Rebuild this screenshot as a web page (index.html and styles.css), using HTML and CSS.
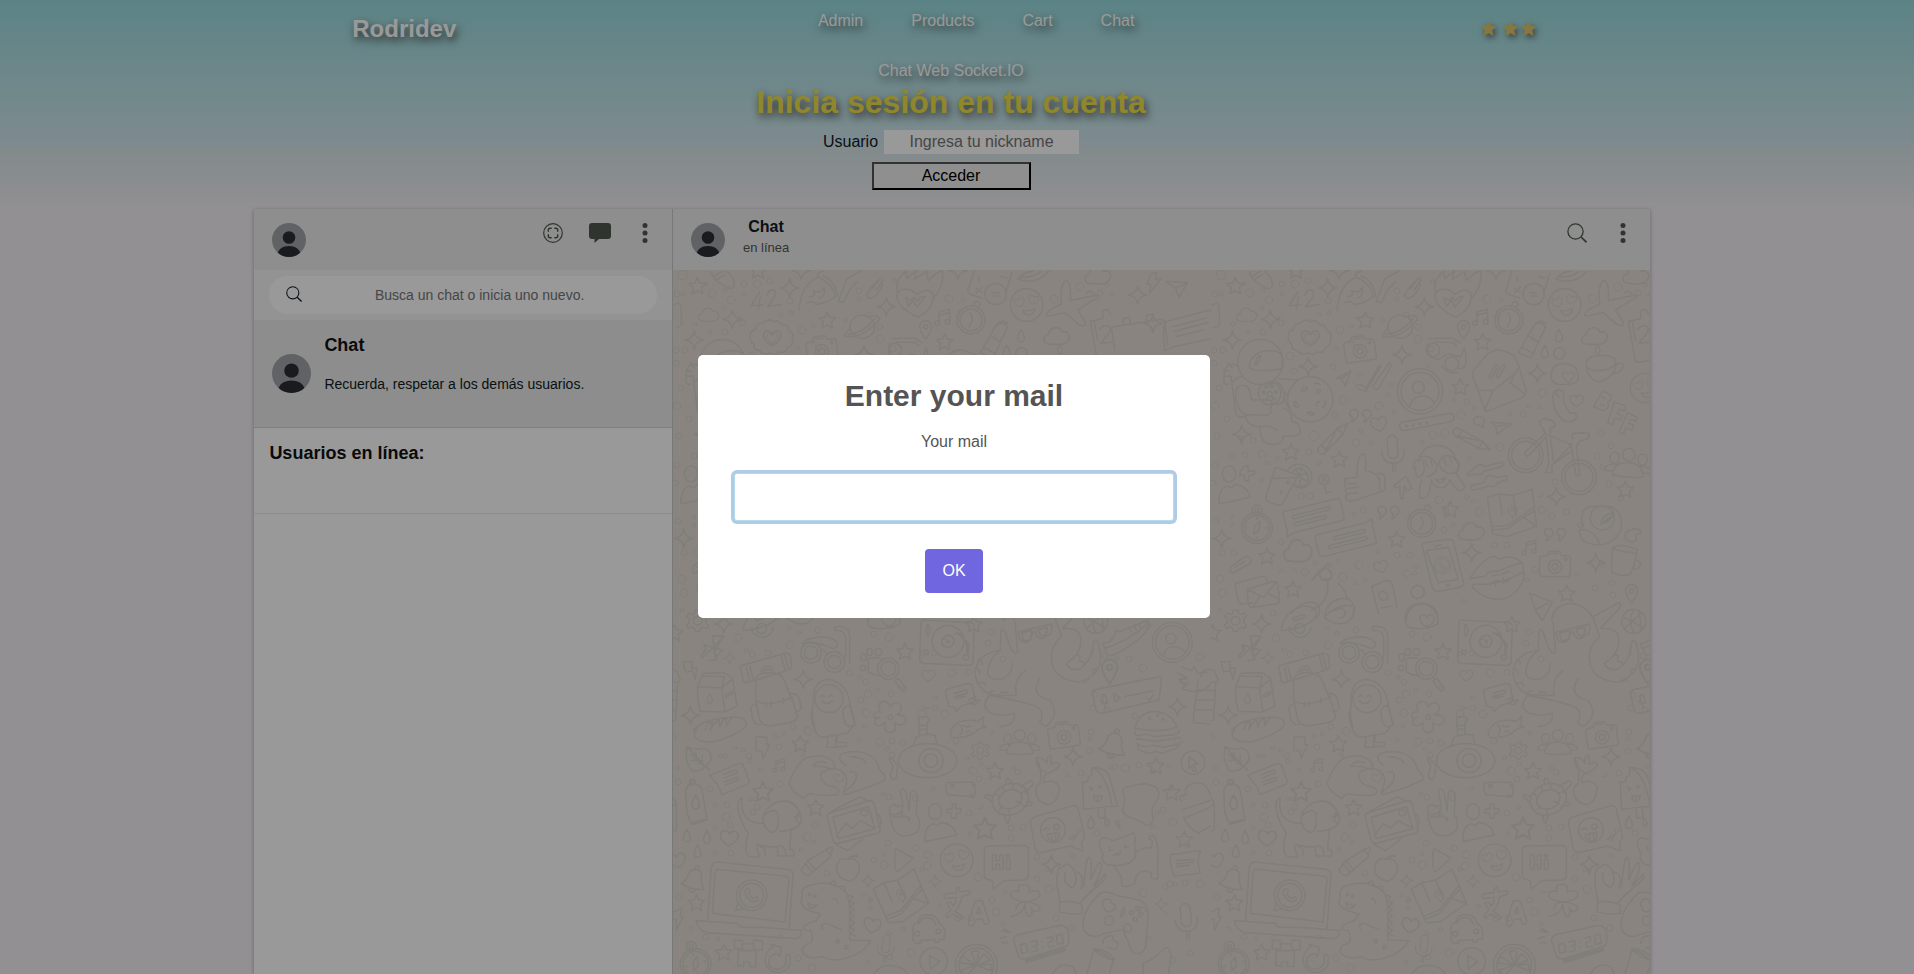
FILE: index.html
```html
<!DOCTYPE html>
<html lang="es">
<head>
<meta charset="utf-8">
<title>Chat</title>
<link rel="stylesheet" href="styles.css">
</head>
<body>
<svg class="defs" aria-hidden="true">
  <defs>
    <symbol id="avatar" viewBox="0 0 34 34">
      <clipPath id="disc"><circle cx="17" cy="17" r="17"/></clipPath>
      <g clip-path="url(#disc)">
        <rect width="34" height="34" fill="#a1a4a8"/>
        <circle cx="17" cy="14.500" r="6.300" fill="#2b2d34"/>
        <path d="M5 34C5 26 11 23 17 23s12 3 12 11z" fill="#2b2d34"/>
      </g>
    </symbol>
    <symbol id="search" viewBox="0 0 20 20">
      <circle cx="8.500" cy="8.500" r="7.600" fill="none" stroke="currentColor" stroke-width="1.300"/>
      <path d="M14 14l5.500 5.300" fill="none" stroke="currentColor" stroke-width="1.700"/>
    </symbol>
    <symbol id="dots" viewBox="0 0 20 20">
      <g fill="currentColor"><circle cx="10" cy="2.500" r="2.500"/><circle cx="10" cy="10" r="2.500"/><circle cx="10" cy="17.500" r="2.500"/></g>
    </symbol>
    <symbol id="star" viewBox="0 0 16 16">
      <path fill="#e1c869" stroke="#e1c869" stroke-width="1" stroke-linejoin="round" d="M8 1l2.100 4.500 5.200.7-3.800 3.600 1 5.200L8 12.600l-4.500 2.400 1-5.200L.7 6.200l5.200-.7z"/>
    </symbol>
  </defs>
</svg>

<header class="top">
  <nav class="nav">
    <a class="brand" href="#">Rodridev</a>
    <ul class="links">
      <li><a href="#">Admin</a></li>
      <li><a href="#">Products</a></li>
      <li><a href="#">Cart</a></li>
      <li><a href="#">Chat</a></li>
    </ul>
    <div class="stars">
      <svg><use href="#star"/></svg>
      <svg class="star-gap"><use href="#star"/></svg>
      <svg><use href="#star"/></svg>
    </div>
  </nav>
  <form class="login">
    <p class="sub">Chat Web Socket.IO</p>
    <h1 class="title">Inicia sesión en tu cuenta</h1>
    <div class="field">
      <label for="nick">Usuario</label>
      <input id="nick" type="text" placeholder="Ingresa tu nickname">
    </div>
    <button class="enter" type="button">Acceder</button>
  </form>
</header>

<main class="app">
  <aside class="side">
    <div class="bar">
      <svg class="avatar"><use href="#avatar"/></svg>
      <div class="tools">
        <button type="button" aria-label="Estados"><svg class="icon" viewBox="0 0 20 20" fill="none" stroke="currentColor"><circle cx="10" cy="10" r="9.300" stroke-width="1.200"/><path stroke-width="1.400" stroke-linecap="round" d="M5.300 8.200V7c0-1.200.6-1.800 1.800-1.800h1.100M11.800 5.200h1.100c1.200 0 1.800.6 1.800 1.800v1.200M14.700 11.800V13c0 1.200-.6 1.800-1.800 1.800h-1.100M8.200 14.800H7.100c-1.200 0-1.800-.6-1.800-1.800v-1.200"/></svg></button>
        <button type="button" aria-label="Mensajes"><svg class="icon bubble" viewBox="0 0 22 20"><path fill="currentColor" d="M3 0h16a3 3 0 0 1 3 3v10a3 3 0 0 1-3 3h-9l-4.500 4v-4H3a3 3 0 0 1-3-3V3a3 3 0 0 1 3-3z"/></svg></button>
        <button type="button" aria-label="Menú"><svg class="icon"><use href="#dots"/></svg></button>
      </div>
    </div>
    <div class="find">
      <label class="pill">
        <svg class="find-icon"><use href="#search"/></svg>
        <input type="text" aria-label="Buscar" placeholder="Busca un chat o inicia uno nuevo.">
      </label>
    </div>
    <article class="item">
      <svg class="avatar-lg"><use href="#avatar"/></svg>
      <div>
        <h2 class="item-title">Chat</h2>
        <p class="item-text">Recuerda, respetar a los demás usuarios.</p>
      </div>
    </article>
    <section class="online"><h2 class="item-title">Usuarios en línea:</h2></section>
  </aside>
  <section class="room">
    <div class="bar">
      <svg class="avatar"><use href="#avatar"/></svg>
      <div class="who">
        <h2 class="who-name">Chat</h2>
        <p class="who-state">en línea</p>
      </div>
      <div class="tools">
        <button type="button" aria-label="Buscar"><svg class="icon"><use href="#search"/></svg></button>
        <button type="button" aria-label="Menú"><svg class="icon"><use href="#dots"/></svg></button>
      </div>
    </div>
    <div class="wall">
      <svg class="doodles" aria-hidden="true">
        <defs>
          <path id="s5" d="M0-24L7-8 25-6 12 6 16 24 0 15-16 24-12 6-25-6-7-8z"/>
          <path id="s4" d="M0-28Q3-3 28 0 3 3 0 28-3 3-28 0-3-3 0-28z"/>
          <path id="heart" d="M0 22C-14 14-26 4-24-9-21-24-4-22 0-10 4-22 21-24 24-9 26 4 14 14 0 22z"/>
          <path id="drop" d="M0-20Q12 0 10 8A10 10 0 0 1-10 8Q-12 0 0-20z"/>
          <path id="cloud" d="M-26 22C-46 20-42-6-26-6-24-30 8-34 14-14 34-20 44 2 32 12 28 28-6 24-26 22z"/>
          <g id="cam"><path d="M-46-16Q-46-24-38-24L-22-26-18-38H14L20-26 38-24Q46-24 46-16V30Q46 38 38 38H-38Q-46 38-46 30z"/><circle cy="8" r="20"/><circle cy="8" r="9"/><path d="M-12-31H8"/><circle cx="32" cy="-14" r="4"/></g>
          <g id="note"><path d="M-14 18V-16L18-24V12M-14-6L18-14"/><circle cx="-20" cy="18" r="7"/><circle cx="12" cy="13" r="7"/></g>
          <g id="quote"><path d="M-28 0A13 13 0 1 1-10 12Q-14 24-24 24-18 16-20 8-26 8-28 0zM10 0A13 13 0 1 1 28 12Q24 24 14 24 20 16 18 8 12 8 10 0z"/></g>
          <g id="love"><circle r="49"/><use href="#heart" transform="translate(-22 -8) rotate(-14) scale(.65)"/><use href="#heart" transform="translate(20 -16) rotate(14) scale(.65)"/><path d="M-12 16Q6 22 24 10 20 34 2 30-8 28-12 16z"/></g>
          <g id="clock"><circle r="42"/><circle r="33"/><path d="M-2-20Q8-6 2 6L-6 20M-36-28A12 12 0 0 1-44-10M8-44l2-8Q22-60 28-48L22-40"/></g>
          <g id="pencil"><path d="M-56 12L26-12 60 0 26 12-56 12Q-66 10-66 0t10-12L26-12V12M-44-12V12M46-5V5"/></g>
          <g id="msg"><path d="M-84-34H76Q88-34 88-22V22Q88 34 76 34H-70L-92 42-88 26V-22Q-88-34-84-34z"/><path d="M-58-16H50a5 5 0 0 1 0 10H-58a5 5 0 0 1 0-10zM-58 6H30a5 5 0 0 1 0 10H-58a5 5 0 0 1 0-10z"/></g>
          <g id="pin"><path d="M0 30Q-18 4-18-8A18 18 0 0 1 18-8Q18 4 0 30z"/><circle cy="-8" r="6"/></g>
          <g id="mic"><rect x="-15" y="-52" width="30" height="70" rx="15"/><path d="M-34-6Q-32 30 0 32T34-6M-4 32V58M4 32V58"/></g>
          <g id="bell"><path d="M-36 22Q-22 10-20-10-18-30 0-30T20-10Q22 10 36 22 0 34-36 22zM-8 30A9 9 0 0 0 10 30"/><circle cy="-36" r="6"/></g>
          <g id="people"><circle cx="0" cy="-26" r="19"/><path d="M-46 38Q-44-2 0-2T46 38Q0 46-46 38z"/><ellipse cx="-42" cy="-14" rx="14" ry="17"/><ellipse cx="42" cy="-14" rx="14" ry="17"/><path d="M-46 26H-70Q-68 4-36 6M46 26H70Q68 4 36 6"/></g>
          <g id="user"><ellipse cx="-14" cy="-34" rx="20" ry="24"/><path d="M-44 56Q-46 10-20 2L-6 8 4-2Q42 2 50 36z"/></g>
          <g id="gear"><path d="M-7-32H7L9-22 17-18 26-24 33-14 25-6V6L33 14 26 24 17 19 8 24 6 32H-7L-9 23-18 18-27 24-33 13-25 6V-6L-33-13-26-24-17-18-9-22z"/><circle r="13"/></g>
          <g id="compass"><circle r="46"/><circle r="38"/><path d="M-10 18L-6-8 10-20 6 8zM0-32v6M0 26v6M-32 0h6M26 0h6"/><circle cy="-54" r="15"/><circle cy="-54" r="6"/></g>
          <g id="profile"><circle r="68"/><circle r="57"/><circle cx="-5" cy="-12" r="18"/><path d="M-30 44Q-24 16 4 14 30 14 42 32"/></g>
          <g id="phone"><circle r="46"/><path d="M-40 22L-48 46-20 40"/><circle r="36"/><path d="M-18-16Q-8-26-4-12L-8-4Q-2 8 6 10L14 4Q26 10 16 18-2 24-16 2-22-8-18-16z"/></g>
          <g id="map"><path d="M-72-44L-36-54 6-50 62-68 76 42 38 56-14 74-56 66zM-36-54L-28 6M6-50L14 10M-58 44L-10 40 70-16M-54 54L-10 50 36 16 76 44M36 16L70-4"/><use href="#pin" transform="translate(4 -2) scale(.7)"/></g>
          <pattern id="tile" width="538" height="704" patternUnits="userSpaceOnUse">
            <g class="ink" transform="scale(.33333) translate(-30 -30)">
              <use href="#s5" x="103" y="77"/><use href="#s5" x="285" y="30"/><use href="#s5" x="493" y="180"/><use href="#s5" x="845" y="245"/><use href="#s5" x="778" y="380"/><use href="#s5" x="270" y="575"/><use href="#s5" x="415" y="597"/><use href="#s5" x="748" y="747"/><use href="#s5" x="587" y="837"/><use href="#s5" x="198" y="888"/><use href="#s5" x="276" y="987"/><use href="#s5" x="1097" y="1000"/><use href="#s5" x="1273" y="688"/>
              <use href="#s4" x="208" y="178"/><use href="#s4" x="380" y="84"/><use href="#s4" x="94" y="240"/><use href="#s4" x="670" y="140"/><use href="#s4" x="603" y="284"/><use href="#s4" x="322" y="319"/><use href="#s4" x="122" y="523"/><use href="#s4" x="1009" y="340"/><use href="#s4" x="1066" y="710"/><use href="#s4" x="812" y="878"/><use href="#s4" x="1184" y="908"/><use href="#s4" x="62" y="835"/><use href="#s4" x="415" y="32"/><use href="#s4" x="885" y="32"/><use href="#s4" x="1424" y="105"/><use href="#s4" x="1470" y="190"/>
              <path d="M145 35Q150 62 182 76 210 96 214 74 214 50 190 34M150 50l28-16M158 60l26-16"/>
              <path d="M290 96l-26 42 36-4m-8-22l-6 36M312 106q4-18 20-16 14 10-6 32l-12 18 40-6"/>
              <path d="M408 150Q416 70 466 52 510 70 518 110 490 130 458 134 456 120 430 128M466 50Q456 40 480 34M480 48Q516 60 524 108M526 124l26-68 44-24M526 124l16 4Q560 80 584 66M440 110q20 0 12-18 24 10 32-10 4 30-16 32"/>
              <path d="M612 110q0-24 46-58M620 116q20 0 40-44M628 86l18-24M640 90l20-30M612 100q-4 16 12 14"/>
              <path d="M765 172Q700 140 702 108 708 80 744 90L762 104Q790 80 808 98 820 140 765 172zM704 98Q694 60 728 34L732 56 760 32 754 58 790 34 796 62 820 40 838 32Q846 76 810 116"/>
              <path d="M728 112l8 26 16-16 10 20 24-32-14 2-8 12-10-12-10 10z"/>
              <path d="M934 30L914 92Q916 102 930 106L956 114M1046 40L1028 100"/><circle cx="998" cy="102" r="32"/><path d="M986 98h22M988 108h22M940 86l18 10M958 82l-18 16M948 50v14M1014 50l18 4"/>
              <path d="M1066 56Q1080 36 1110 34M1066 58Q1120 76 1158 34M1074 50Q1110 54 1134 34"/>
              <use href="#love" x="1091" y="135"/><use href="#clock" x="924" y="180"/><use href="#note" x="842" y="172"/><use href="#pin" x="788" y="208"/>
              <path d="M1206 62q20-4 16 60l76-16q22 4-10 16l-44 28 22 34q4 22-20 8l-40-34-46 10q-18 0 0-18l36-18q-8-48 10-70zM1270 100q8-16 26 6"/>
              <use href="#cloud" transform="translate(1306 48)"/><use href="#cloud" transform="translate(138 166) scale(.8)"/><use href="#cloud" transform="translate(1182 230)"/><use href="#cloud" transform="translate(812 816)"/><use href="#cloud" transform="translate(292 874) scale(1.100 1.300)"/>
              <path d="M30 136L44 130Q52 128 54 138L56 190Q54 200 40 202M30 150l-6 4M30 178l-6 4"/>
              <path d="M262 232q-4-20 16-24 0-20 22-18 14-18 30-4 18-10 26 8 20-2 20 16 22 10 12 30 4 18-16 24-2 16-24 12-12 14-28 2-20 10-30-6-20-2-18-20-12-8-10-20z"/><use href="#heart" transform="translate(328 234) scale(1.100)"/><use href="#heart" transform="translate(328 234) scale(.7)"/>
              <ellipse cx="598" cy="200" rx="37" ry="35"/><path d="M562 204Q536 232 550 230 600 236 648 180 652 164 622 168M556 224Q600 220 636 176"/>
              <use href="#cam" transform="translate(476 266) rotate(-8)"/><use href="#cam" transform="translate(1062 912)"/>
              <circle cx="696" cy="270" r="20"/><circle cx="752" cy="312" r="21"/><path d="M684 236l70-2 24 14M680 250Q672 296 714 298L736 284M700 246l58 2 8 8M774 326Q800 330 794 280L790 262 780 290 742 282M722 318Q740 344 770 338"/>
              <path d="M990 294l-38-16 46-80q20-18 36 2zM962 262l38 20M980 226l32 20M1002 192l18-10 14 8"/><use href="#drop" transform="translate(996 234) scale(.5)"/>
              <use href="#drop" x="1074" y="228"/><use href="#drop" x="1031" y="276"/><use href="#drop" transform="translate(1190 268) scale(.7)"/><circle cx="1075" cy="280" r="17"/>
              <path d="M1052 360Q1044 312 1090 310 1132 312 1132 356 1128 372 1104 372 1064 380 1052 360z"/><use href="#heart" transform="translate(1102 350) scale(.75)"/>
              <path d="M1156 314Q1152 290 1196 286 1244 286 1244 306 1240 328 1194 332 1160 334 1156 314zM1156 320Q1160 356 1190 366 1240 358 1246 308M1246 312q28-8 18 14-14 18-26 12"/>
              <path d="M1344 164l-12-16-14 4 2 24-38 8 20 114q2 10 14 8L1350 300M1294 186l10 56M1312 208q6-14 24-10 14 12-8 34l-14 18 36-4"/>
              <circle cx="178" cy="306" r="68"/><path d="M146 312Q156 274 206 272 236 270 244 290V326Q200 336 158 330 142 326 146 312zM162 316q4-28 18-30-4 24-18 30M112 318Q76 300 70 340T82 372M80 308l14 16M68 330l18 4M68 350l20-2M90 350L104 458Q108 476 130 470M92 368Q108 350 128 348M106 390Q110 370 136 378 150 390 152 420H208Q220 430 208 444 214 464 196 466L132 464Q98 440 106 390zM134 466Q136 500 180 500M178 500Q176 552 216 554 250 550 246 528 300 534 298 510 296 486 272 484 276 456 248 444M184 500Q208 496 228 510M200 380Q226 354 240 378 258 400 244 430L208 434"/>
              <circle cx="206" cy="400" r="34"/><circle cx="206" cy="402" r="8"/><circle cx="188" cy="396" r="4"/><circle cx="196" cy="380" r="4"/><circle cx="214" cy="380" r="4"/><circle cx="224" cy="396" r="4"/><circle cx="198" cy="418" r="4"/><circle cx="218" cy="416" r="4"/>
              <circle cx="328" cy="418" r="68"/><path d="M236 356L290 360M258 400Q240 410 268 450M300 392q4-16 20-10-6 14-20 10M346 400q2-14 12-10-2 14-12 10M280 424q16 8 10 20-14-4-10-20M320 458q10-6 20 4-12 8-20-4M346 438q0-14 10-12M372 420q6 14-8 22M340 372q12-6 18 2"/>
              <path d="M404 356l46-24-18 48-10-24zM422 356l18-14M464 378q18-12 30 8l40-68M470 384l24 12 46-80M516 378l48-70q10 2 4 14l-36 64q-14 6-16-8"/>
              <use href="#profile" x="657" y="394"/>
              <path d="M598 488l146-28q16 0 16 12 0 12-16 14l-134 26q-20-2-12-24z"/><circle cx="617" cy="498" r="3"/><circle cx="637" cy="495" r="3"/><circle cx="657" cy="491" r="3"/><circle cx="677" cy="489" r="3"/>
              <path d="M816 350Q812 336 824 324L862 280Q880 268 900 270L938 284 954 320 976 394Q976 404 960 414L864 452Q854 456 850 446zM816 350L830 390 876 392 946 338M876 392L852 448M930 370L974 404M950 326L928 370M864 350l18-34q8-4 8 6l-18 32zM884 350l20-34q8-6 8 4l-20 34z"/>
              <path d="M1068 390q20-4 20 18v20l20 32q20-6 18 14-16 20-40 6-34-30-30-76 2-12 12-14zM1068 390q-12 12 8 22"/><use href="#heart" transform="translate(1127 422) scale(.85)"/>
              <path d="M1204 394l24 10q8 16-8 22 8 20-14 26l-28-12zM1202 410l12 6M1198 432l12 6M1240 426l34 12v14l-20-4-6 12 16 8-6 12-18-6-6 20-14-6zM1280 458l28 14-2 12-18-6-6 12 16 6-6 14-18-6-6 18-14-6z"/>
              <use href="#love" transform="translate(1332 384) scale(.9)"/>
              <use href="#quote" x="474" y="462"/><use href="#quote" x="558" y="752"/><use href="#quote" x="1058" y="818"/><path d="M818 484a16 14 0 1 1 26 10l6 8q-14 0-16-8-16 2-16-10z"/>
              <use href="#heart" transform="translate(534 492) rotate(-10)"/><use href="#heart" transform="translate(540 920) rotate(-14) scale(.85)"/>
              <use href="#pencil" transform="translate(400 532) rotate(-46)"/><use href="#pencil" transform="translate(816 542) rotate(28)"/>
              <path d="M872 486l60 6-44 30-4-22zM884 500l30-6"/><use href="#mic" transform="translate(576 578) rotate(-4)"/>
              <circle cx="974" cy="586" r="52"/><circle cx="974" cy="586" r="42"/><circle cx="1134" cy="652" r="52"/><circle cx="1134" cy="652" r="42"/><path d="M970 578L1034 520 1018 496Q1012 476 1036 476 1070 486 1060 500L1046 506 1050 516 980 590zM1036 530l8 80-10 28h20l-2-22 58-42M1048 528l64 26-54 56zM1116 536l-4-12q10-8 52-4 4 20-26 22l-12 16 10 86q-6 8-12 0l-14-94"/>
              <use href="#people" transform="translate(1282 610) rotate(4)"/>
              <path d="M638 624Q634 602 654 598 664 556 712 556 752 560 764 596 784 610 768 636M664 600Q680 640 652 652 640 640 644 620M654 604q6-20 26-14 22 6 28 28 0 24-28 32M714 612q2-24 26-26 22 2 32 28 0 30-32 26-20-8-26-28M672 600l8 22M688 596l6 22M728 594l8 22M744 588l8 20M662 660Q652 690 656 710 672 724 684 700L692 660Q700 684 720 684 740 680 746 660L768 690Q784 696 792 680L764 638M704 658q16 4 30-6-6 18-20 16z"/>
              <path d="M800 640l30-24q12-6 20 4l54-14q10 6-2 14l-54 14q-8 16-24 8l-22 6zM810 676l40-8q4-24 20-22l16 6 28-4q10 8 0 12l-24 8q-8 16-24 10l-50 12q-12-2-6-8z"/>
              <use href="#user" transform="translate(98 676)"/><path d="M128 620l12-4 2 18 18-2v10l-16 6-2 16-10-2-2-16-14 0 2-10z"/>
              <path d="M224 622l-30 90q0 10 10 14l28 10q10 0 14-8l46-82zM212 656l74-4M258 632q26-30 56-14 30 20 10 56-22 20-50 0M276 634q20-18 38 0 16 24 0 42-16 8-30-2M296 648l-12-20M296 648l6-26M296 648l22-10M296 648l20 16M296 648l2 26"/><circle cx="240" cy="696" r="3"/><circle cx="262" cy="668" r="4"/><circle cx="368" cy="658" r="15"/><circle cx="368" cy="656" r="5"/><path d="M370 674l6 26 14-6"/>
              <path d="M432 664q0-10 12-10l26-2q-4-20 2-50 4-24 16-20 12 14 4 48 40 10 44 30v36l-60 20q-36 14-42-2 0-10 6-12-12-8-4-18-12-12-2-18-6-6-2-12zM436 672l30-2M438 686l34-4M440 702l30-4M532 640q16 0 20 10v34q-4 14-18 10"/>
              <path d="M578 678l32-26q6-2 10 6l12 28-14 6-8-14-4 38-8-2-2-36-16 6z"/>
              <use href="#msg" transform="translate(338 768) rotate(-14)"/><use href="#msg" transform="translate(434 838) rotate(166)"/>
              <use href="#compass" x="168" y="804"/><use href="#clock" x="662" y="790"/><use href="#map" x="931" y="756"/>
              <path d="M1144 800Q1134 748 1166 740 1200 736 1236 742 1272 770 1258 814 1230 860 1180 854 1136 846 1136 820 1132 810 1144 808 1180 810 1196 852"/><circle cx="1204" cy="774" r="36"/><path d="M1200 792q0-24 34-34 4 24-34 34zM1206 788l26-20M1272 834q-2-24 30-28 16 0 20 14-24 0-16 16-6 16-20 8z"/>
              <path d="M664 858Q662 850 674 848L742 838Q754 838 758 846L788 970Q788 980 776 982L710 994Q698 994 694 984zM676 872L742 862 772 958 712 968zM700 860l20-6"/><g transform="translate(724 916) scale(.55)"><use href="#phone"/></g><circle cx="741" cy="976" r="4"/>
              <path d="M806 956Q850 888 882 890 896 902 912 892 944 888 964 910 968 926 970 950 948 1010 900 1018 850 1020 814 982q-4-10 10-10 60 8 140-34M808 956l46-8Q860 930 892 934 920 920 962 908M866 970l30-8M872 948l20-4M900 942l26-8M906 966l20-6M884 962v16M906 954v18"/>
              <use href="#note" transform="translate(988 862) scale(.9)"/><path d="M1236 862Q1230 920 1232 936 1252 950 1286 944 1298 930 1308 874M1236 862q30-14 72 8 4 12-14 8-50-4-58-16zM1300 900q22 0 18 18-10 12-22 8"/>
              <path d="M90 926q-6 10 4 14l50-28q10-10 2-18-8-10-20 0L92 918zM102 922l30-18M104 970l82-22q8 0 10 8l4 12M104 970q-4 4 8 54 2 10 14 8l28-4M138 988l80-24q10 0 12 10l6 46q-2 10-12 12l-70 10q-10 0-12-12zM140 990l48 22 36-44M156 1040l22-34M236 1020l-34-20"/>
              <path d="M332 962l50-54M340 950q20-30 38-24 16 10 14 30l-22 2M380 962Q386 1030 330 1050M412 970q28 30 26 50M270 1060q40-44 76-30 20 20 0 46M382 1040q20-30 60-24 24 16 14 50M512 980l40-18q20 0 22 10l14 70M512 980l20 80M534 1000q12-14 24 2 8 18-12 20-14-6-12-22M540 1044l32-6"/><circle cx="374" cy="944" r="18"/>
              <circle cx="650" cy="996" r="20"/><path d="M612 1084Q610 1032 664 1030 716 1036 710 1084M986 1000l68 26-30 56-20-30zM1004 1050l36-20"/><use href="#pin" x="1292" y="1000"/>
              <path d="M1354 200l140-22q14 0 12 16l8 60M1354 200q-10 0-8 10l10 60M1380 196v-20l20-4 2 22M1450 186v-20l20-4 2 20M1504 186l130-34q14-2 18 8l14 60q0 12-10 14l-124 26-26 12-2-18q-6-50 4-68zM1530 200l100-26M1534 214l100-26M1540 230l80-20M1538 84l-30-20 66 4-26 44-10-28zM1538 84l36-16M1452 72l12-30 18-4-4 22 16-4-34 44 4-26z"/>
            </g>
            <g class="ink" transform="scale(.33333) translate(-30 990)">
              <use href="#s5" x="34" y="98"/><use href="#s5" x="726" y="154"/><use href="#s5" x="932" y="72"/><use href="#s5" x="412" y="431"/><use href="#s5" transform="translate(300 574) scale(1.200)"/><use href="#s5" x="458" y="622"/><use href="#s5" x="996" y="512"/><use href="#s5" transform="translate(966 684) scale(1.350)"/><use href="#s5" x="100" y="908"/><use href="#s5" x="182" y="1057"/><use href="#s5" x="1478" y="497"/><use href="#s5" x="1526" y="576"/><use href="#s5" x="1564" y="717"/>
              <use href="#s4" x="182" y="72"/><use href="#s4" transform="translate(200 174) scale(.7)"/><use href="#s4" x="421" y="238"/><use href="#s4" x="82" y="346"/><use href="#s4" x="1230" y="470"/><use href="#s4" x="1165" y="793"/><use href="#s4" transform="translate(616 842) scale(.7)"/><use href="#s4" transform="translate(816 844) scale(.7)"/><use href="#s4" x="1543" y="320"/><use href="#s4" transform="translate(1494 912) scale(.7)"/>
              <use href="#gear" x="104" y="62"/><use href="#gear" transform="translate(952 452) scale(.8)"/>
              <path d="M240 92Q250 30 310 18 350 18 346 46 330 82 240 92zM276 54l28-10q12 0 6 8l-26 10q-10 0-8-8M266 90q10 22 36 22 26-6 28-30M372 56q-2-44 40-60M374 48q40-40 78-30M376 56q20 20 56 14 30-16 30-48M402 32q20-14 30 0 4 20-16 22"/><circle cx="296" cy="86" r="15"/>
              <path d="M122 134l56 16-20 22-10-64 34 2-64 64q-10-6 12-24zM146 108l34 0-22 40M138 182l24-4-10-24"/>
              <path d="M60 186l28-2-2 22 16-2-6 34-8-26-20 4zM280 410l32 2-2 22 10 0-20 42-4-24-18 0z"/>
              <path d="M104 260L120 220 182 218 208 234 222 318 186 336 112 334Q102 300 104 260zM104 260L176 264 206 240M176 264L186 336M120 228L184 230 176 264M188 284l20-10v8l-20 10z"/><use href="#drop" transform="translate(140 296) scale(.8)"/>
              <path d="M234 204q-8-4 4-8L366 160q12-2 16 8l4 28q0 12-10 14L252 248q-10 0-12-8zM250 202l10 40M260 198l12 44M354 164l12 46M364 162l12 44M278 248Q276 224 300 220 350 212 362 238L388 300 404 350Q402 362 380 368L320 378Q292 376 288 350L278 300zM278 300Q306 326 388 292M384 280q20 0 26 20l4 24q-4 10-18 12M280 314q-18 0-16 16l6 30q8 16 24 14M310 308v14M324 304v16M360 294v16M294 216q2-16 18-18 14 0 18 16M302 214q8-10 20-2"/>
              <circle cx="444" cy="158" r="31"/><circle cx="444" cy="158" r="20"/><circle cx="514" cy="186" r="31"/><circle cx="514" cy="186" r="20"/><path d="M416 130Q450 120 512 146L520 142Q530 130 514 120 480 100 424 122M474 154q10-10 16 8M518 80q40-6 42 30v80M516 92q30-4 32 22v60M516 80v12"/>
              <path d="M448 340L452 280Q460 240 496 238 544 246 556 290L576 372 552 400 478 412Q460 408 456 390zM456 390Q436 350 448 330M540 330q16-24 24-4l12 50q-20 10-30-6-8-20-6-40zM494 412v18q-8 10 0 12h24v-30M522 408v18l28 2v12h-30M472 290q8-8 14 0M496 290q8-8 14 0M476 302q14 18 32 0"/><circle cx="498" cy="296" r="42"/>
              <circle cx="676" cy="206" r="32"/><circle cx="676" cy="206" r="22"/><path d="M696 242l10-8q14 20 24 30-4 14-14 6-14-14-20-28M616 176q20-6 36 0M616 176v40q20 12 38 10"/><ellipse cx="602" cy="172" rx="8" ry="11"/><ellipse cx="620" cy="156" rx="8" ry="11"/><ellipse cx="646" cy="156" rx="10" ry="11"/><ellipse cx="600" cy="204" rx="8" ry="8"/>
              <path d="M616 76Q610 20 660 10 706 16 712 66 704 82 676 84 630 90 616 76z"/><use href="#heart" transform="translate(678 62) scale(.9)"/><use href="#heart" transform="translate(796 226) scale(.8)"/><use href="#heart" transform="translate(198 714) rotate(6) scale(1.100)"/><use href="#heart" transform="translate(44 782) rotate(-14)"/><use href="#heart" transform="translate(628 976) rotate(10) scale(1.050)"/><use href="#heart" transform="translate(528 534) scale(.65)"/>
              <path d="M780 60L922 68Q936 70 934 84L930 186Q928 196 916 196L780 190Q770 188 770 178L774 68Q774 60 780 60zM876 102q14-8 24 10l12 22v28M882 98l22 20 14 16-2 28"/><circle cx="855" cy="124" r="48"/><circle cx="855" cy="124" r="18"/><circle cx="855" cy="124" r="3"/><circle cx="909" cy="172" r="8"/><circle cx="789" cy="157" r="7"/><path d="M792 74q8-2 8 14 0 18-6 20-6-8-2-34"/>
              <path d="M632 350q0-18 20-14-14-30 14-32 14 2 14 18 16-24 32-8 10 20-12 30 36 2 28 22-14 18-34 2 10 28-14 30-20-4-14-32-16 20-30 6-4-20 14-20-18 4-18-2z"/><circle cx="682" cy="352" r="7"/>
              <path d="M848 276q0-8 10-10l58-16q10 0 12 8l8 40q0 8-10 10l-30 10-16 16-6-12q-16 0-18-8zM874 280l36-10q8 4 0 10l-34 10M878 296l30-8M918 300l20-10-6 12 20-2-14 14-18-4"/>
              <path d="M1052 60Q1060 12 1112 10 1156 16 1176 54L1196 110Q1160 140 1166 180 1170 240 1250 246 1330 220 1308 140 1300 110 1292 126 1288 180 1254 206 1220 216 1210 190 1260 160 1252 110 1246 82 1200 86M1174 52L1250 10Q1268 4 1252 28L1198 86M1056 66l8 90Q1050 170 1034 120 1026 84 1014 90L1012 150Q976 176 974 220 980 244 1020 236 1050 220 1048 190M1014 150Q940 160 936 220 944 280 1000 286H1060Q1050 240 1086 212M1130 236Q1100 290 1160 300 1190 340 1160 368 1150 388 1130 368 1150 330 1110 316 1060 300 980 286 950 320 984 340 1030 350 1054 340 1060 376 1010 380 1000 370M1180 246q0 50 24 70M1180 250Q1200 270 1260 250M1204 320q40 0 62-38-20 80-96 66"/><path d="M1066 96l98-24q6 10-2 30l-24 14q-20 0-20-22-16 8-12 20-14 20-30 10-10-8-10-28zM1076 98l30-6-2 24q-16 12-24 2zM1126 88l26-6q2 20-10 26-14 0-16-20"/><circle cx="1298" cy="64" r="36"/><path d="M1266 50l62 34M1270 86l50-46M1298 28q-20 36 2 72M1310 30q14 34 8 64"/>
              <path d="M946 180q14 0 12 14M936 206q16 2 14 16M950 250q16-8 18 8M978 282q4-12 16-8M1010 286q0-14 24-8M1240 164q14 0 10 14M1250 184q18 0 14 12M1290 148q-10 6 2 14M1300 206q-14 2-8 14M1264 248q0-12 14-8"/>
              <ellipse cx="794" cy="482" rx="88" ry="51"/><circle cx="804" cy="482" r="36"/><circle cx="804" cy="482" r="20"/><path d="M752 438l6-26q30-14 58-6l6 26M770 404l-4-48q8-10 28-4 10 10-2 16v36M768 376h24M768 388h24M704 496q-26-34-24-16l10 20-8 26q10 24 18 4l4-34"/>
              <path d="M862 396Q876 360 924 360L944 364 962 350 958 378 970 380 946 388Q920 416 868 412 860 404 862 396zM890 376q14 8 2 28M902 376q10 10 22 0M910 396q10-6 14 0"/>
              <use href="#people" transform="translate(1070 428) scale(.86)"/><use href="#cam" transform="translate(1202 404) rotate(-8)"/>
              <path d="M94 398Q100 360 200 352 250 348 250 372 240 400 150 426 90 428 94 398zM128 388q4-26 20-20l-6 22q16-30 26-28l2 20q8-26 20-26v22l16-24"/>
              <path d="M72 440Q100 452 124 444 146 452 144 480L128 500 140 510M128 500Q104 520 84 510 64 480 72 440zM82 462l44 38M98 458l4 22-18 2M118 466v20l-12 6"/>
              <path d="M140 526L230 490 240 494 260 546 252 554 176 584 168 560zM180 524l40-14q8 4 0 10l-36 14M184 546l40-14q8 6-2 10l-34 12"/>
              <use href="#note" transform="translate(350 496) scale(.8)"/>
              <path d="M378 550Q400 490 430 474 480 458 510 484 520 500 512 508 480 498 450 498M472 520Q500 500 524 508 560 520 548 556L542 574Q540 588 560 580L620 560 666 540Q668 524 650 510 640 464 590 456 540 452 530 468 530 490 550 496M378 550Q390 580 424 596 430 580 450 582 480 590 522 584 540 564 494 556 472 544 472 520M560 470q40 0 50 20M450 498q10-20 40-10M560 516q20-6 20 14 0 20-34 44"/>
              <path d="M72 640L68 574Q70 552 94 550 114 554 118 574L132 660 86 674zM80 548q4-10 16-6M86 668l44-10"/><use href="#drop" transform="translate(98 608) scale(1.100)"/><circle cx="88" cy="546" r="8"/>
              <path d="M238 594Q218 600 228 640 240 680 256 700 240 750 256 768 280 776 290 768 276 740 284 732 310 744 344 740 340 768 350 768H394Q392 744 380 750 384 700 384 688M238 594Q230 640 258 660 280 672 300 670M300 650Q306 630 320 620 340 600 374 604 410 620 416 656 414 690 350 694M300 650Q300 690 330 698 352 690 344 640 330 620 300 650M350 606q30-10 50 14M394 650l14-4-10 12 12 12M290 740q20 0 16 26M350 736q20 4 18 30M400 640q14 0 12 12"/>
              <use href="#drop" x="72" y="708"/><use href="#drop" x="132" y="712"/><use href="#drop" x="104" y="754"/><use href="#drop" x="1284" y="668"/>
              <path d="M492 650q0-10 10-12L620 602q10 0 14 10l18 76q0 8-10 12L524 730q-12 0-14-10zM510 652l106-32 20 66-110 30zM520 708l28-38 20 16 24-24 38 20M506 634l84-44 26 14M640 640q16 10 14 30l-10 12M520 734l34 18 44-34"/><circle cx="604" cy="638" r="10"/>
              <path d="M712 572Q722 560 730 580L738 632 742 578Q752 564 762 580L760 644Q776 660 766 690 750 712 712 706 690 700 682 650L680 624Q690 606 702 620L720 616zM684 642q28 8 36-20M690 650q28 6 28-16M714 654q20-14 24 10M722 646l18 10"/>
              <use href="#user" transform="translate(830 669)"/><path d="M868 612l10 0 2 16 14-4-2 14-10 2-6 16-10-2-2-16-14 0 2-10 16-2z"/>
              <path d="M850 548L930 546 928 560 938 552 934 592 922 590 928 586 922 584 920 590 854 584Q846 560 850 548z"/><circle cx="868" cy="558" r="5"/>
              <ellipse cx="1042" cy="598" rx="56" ry="46" transform="rotate(-24 1042 598)"/><ellipse cx="1042" cy="598" rx="36" ry="28" transform="rotate(-24 1042 598)"/><path d="M996 580l14 10M1010 630l6-14M1040 642l-4-16M1076 612l-16-8M1090 572l-16 6M1052 552l-6 18M1020 560l4 14M1074 560l28-18q16 6 6 14l-20 22M1030 552q-4-20 8-16l6 12M990 590q-26-12-24 0l18 14M1090 606q24-2 14 10l-24 2M1026 644q0 24 8 26 8-14 6-26"/>
              <path d="M1132 550Q1138 500 1120 474 1140 468 1152 492 1150 468 1164 466 1166 480 1164 494 1180 480 1190 494 1180 514 1152 520 1140 530 1142 548 1174 534 1188 560 1190 600 1160 614 1130 612 1120 586 1112 560 1132 550zM1120 474Q1120 510 1148 516"/>
              <path d="M1258 546q20 4 18-16 14 0 10-26 50-4 58 42l20 72Q1320 620 1262 628zM1306 628v22q8 10 20 0l-2-26M1290 504Q1330 520 1346 612M1278 562l12 4-8 6M1308 556l8 4-10 4M1292 588h26q-4 20-16 16-10-4-10-16M1304 590v8"/>
              <path d="M1102 666Q1104 654 1118 650L1226 618Q1242 614 1246 628L1264 706Q1266 718 1256 726L1258 752 1220 738 1134 758Q1120 758 1116 744zM1220 718l14-14M1230 722l16-24"/><circle cx="1170" cy="690" r="37"/><circle cx="1180" cy="680" r="8"/><path d="M1142 690q8-10 16-2M1152 704l36-8q4 20-14 28-18 0-22-20M1166 702v20M1178 700v22"/>
              <path d="M700 746l50 28-46 42q-12-2-8-62zM434 782l60-36q16-8 14 2l-8 24-64 56Q420 824 414 810zM426 790l22 26M436 784l22 26M490 752l14 14M524 790Q534 770 556 778 580 770 590 800 590 830 562 844 528 840 520 810zM556 778q4-14 26-8M570 774q0-10 12-8"/>
              <use href="#love" x="881" y="781"/><path d="M976 738L1084 736Q1096 738 1096 750V828Q1094 840 1082 840L1024 842 990 866 988 842 974 838Q964 836 964 824V750Q966 738 976 738z"/><path d="M988 764h11v18h11v-18h10v44h-10v-16h-11v16h-11zM1030 778h11v30h-11zM1030 764h11v6h-11z"/>
              <path d="M1184 870Q1176 800 1200 800 1212 780 1234 812 1246 850 1230 862 1200 856 1206 820M1240 816q20 6 18 30l-4 20M1262 860q6-80 14-88 14 0 6 66M1284 838q20-52 28-50 14 8-20 70M1296 856l30-34q8 8-8 24-60 50-66 62M1190 904l-6-40M1192 906Q1220 900 1256 914L1258 940Q1230 946 1190 936 1186 920 1192 906z"/>
              <use href="#bell" transform="translate(94 838) rotate(14)"/><use href="#bell" transform="translate(1352 432) rotate(14) scale(1.100)"/>
              <path d="M144 810Q146 786 162 786L376 808Q392 812 390 824L378 988M144 810L134 962M156 822Q156 808 166 808L364 828Q380 830 378 840L366 966 148 940zM100 962L224 970Q228 982 240 982H292L300 982 416 992Q416 1016 396 1016L130 998Q104 990 100 962z"/><use href="#phone" x="266" y="886"/>
              <path d="M22 940l34-16-4 26 8 0-20 42v-34h-14z"/>
              <path d="M418 890Q410 860 450 854 500 840 540 870 560 880 560 940V1020L624 1022Q600 1060 560 1070 510 1090 480 1070 440 1080 420 1060 410 1040 440 1030 456 1020 442 990 420 996 422 980 440 966 460 962L474 942Q420 930 414 910zM500 850l14-8 6 14M530 860l14-2 2 16M556 886l14 4-10 14 14 4-12 14 12 6-12 12 12 8-12 12 12 8-12 14 12 8-12 12 16 6M434 908q20 14 28 6-6 14-22 10zM478 988Q470 970 490 970L536 990M510 896q14 0 14 14"/><circle cx="440" cy="884" r="4"/><circle cx="456" cy="888" r="4"/><circle cx="524" cy="1024" r="5"/><circle cx="550" cy="1042" r="5"/>
              <use href="#map" transform="translate(712 890) rotate(-16)"/>
              <path d="M842 886q4-6 38-8-2-18 10-16v14l30-4q4 10-4 12l-20 6q-4 30-20 44 16 10 26 18-6 10-14 2l-18-12-18 12q-8-4 2-14l10-10-12-20 10-4 10 12q8-12 8-26l-34 4zM916 970l20-66q12-6 22 0l20 60q-4 12-14 8l-6-16-20 4-8 18q-12 2-14-8zM940 940h14l-6-18z"/>
              <path d="M1086 906Q1036 900 1044 878 1056 870 1068 876 1060 850 1086 854 1104 852 1098 878 1116 866 1130 878 1134 900 1086 906 1136 910 1130 930 1112 940 1104 924 1112 944 1100 950 1084 944 1086 906 1086 940 1044 950M1086 906Q1060 906 1058 930"/>
              <path d="M750 990Q748 972 764 966 770 944 790 944 824 944 828 970 844 978 846 1000L842 1018H830L828 1026H816V1018L772 1022V1030H758L750 1020zM766 970Q774 954 792 952 814 954 818 974"/><circle cx="763" cy="1001" r="7"/><circle cx="826" cy="994" r="7"/>
              <use href="#mic" transform="translate(668 1044) rotate(6) scale(.75)"/><path d="M1010 1016l20-6M1016 992l24 6M1020 984l20 12M1016 1028h18"/>
              <path d="M1052 1024Q1050 1008 1066 1004L1190 976Q1212 976 1216 996 1222 1030 1210 1038L1090 1076Q1070 1080 1066 1066zM1088 1082l118-36v6l-116 36zM1072 1034l18-4 4 26-18 4zM1102 1026l18-4 4 12-16 6M1120 1034l2 18-16 4M1136 1024v2M1138 1040v2M1150 1014l18-4 2 12-16 6 4 14 16-4M1180 1006l16-4 6 26-18 6z"/>
              <use href="#compass" transform="translate(98 1092) rotate(-14)"/><path d="M214 1020l24 2v26l-24-2zM272 1020l26 2v28l-26-2zM226 1052h54l-2 48h-18v-14h-18v14l-18-4zM238 1030l34 2M322 1032l34 10-6 26-10-8q-30 8-20 40 30 20 50-10l-2-26h12q10 40-24 52-44 6-50-36 0-24 24-40z"/>
              <circle cx="812" cy="1084" r="41"/><path d="M800 1066l30 18-28 24z"/><circle cx="940" cy="1096" r="63"/><circle cx="940" cy="1096" r="52"/><path d="M940 1096l-14-40q14-8 22 0zM940 1096l-40-26q-10 14-10 18zM940 1096l20-34q12 4 20 20zM940 1096l44-4v20zM940 1096l-46 14 14 20z"/>
              <path d="M634 1120q20-30 60-22 30 4 38 24M1170 1120q20-36 60-20l10 20M1272 1120l20-66Q1320 1050 1350 1084L1340 1120M1292 1046q40 0 64 34-40-4-64-34M1304 1050l36 24"/>
              <path d="M1262 990Q1250 940 1310 880 1330 870 1360 886L1430 900Q1450 906 1456 940L1448 1040Q1440 1064 1416 1060 1400 1050 1396 1026L1380 990Q1330 996 1306 1008 1276 1014 1262 990zM1324 900q20-10 22 10 16 4 10 18-14 6-16 8-16 0-16-12-12-12 0-24zM1376 934l8-10v14l-10 14zM1320 1030q0-26 30-22-4 16 16 20-4 30-30 14"/><circle cx="1338" cy="962" r="14"/><circle cx="1394" cy="984" r="12"/><circle cx="1406" cy="938" r="6"/><circle cx="1424" cy="926" r="6"/><circle cx="1432" cy="944" r="6"/><circle cx="1416" cy="958" r="6"/>
              <use href="#profile" transform="translate(1528 127) scale(.88)"/>
              <path d="M1318 130Q1350 130 1360 90 1370 100 1380 90L1450 62q12 4 6 20Q1440 120 1350 166 1330 170 1328 150zM1324 146Q1400 120 1456 70M1400 86l6 10M1414 80l6 10M1428 74l6 10"/>
              <path d="M1288 280Q1288 270 1300 268L1490 230 1496 234 1488 300 1316 340Q1300 340 1298 326zM1316 286q8-6 12 4l4 14q-2 8-10 6zM1312 300q6 20 22 8M1326 318v8M1352 280l20 12-16 14zM1386 290l84-18M1452 296l8 6 12-20"/>
              <use href="#pin" transform="translate(1340 212) scale(1.300)"/>
              <path d="M1416 386Q1424 336 1478 334 1526 340 1542 380 1500 400 1420 386zM1418 392q-8 14 8 14l28-4 20 8 60-6q20-4 12-14M1420 416l60 8 70-12M1420 430q20 16 50 6l30 6 50-10M1424 438l4 12q30 16 50 4l20 6 46-16 4-14"/><circle cx="1460" cy="356" r="3"/><circle cx="1484" cy="346" r="3"/><circle cx="1500" cy="358" r="3"/>
              <path d="M1556 200l28 12 10-12 10 20 30-4M1544 218l28 16-24 4q0 10 24 14-14 12-14 16l30 6Q1620 280 1644 250M1606 240l-14 104 0 24 50 4M1614 230q0-20 20-22h12M1604 270h40M1602 300h40M1596 330h50M0 210q30-8 42 6l10 24-8 10-6 110-38 8M0 240l46 8M0 272h40M0 300h38M0 330h34"/>
              <circle cx="1590" cy="488" r="35"/><path d="M1578 470l28 22-14 2 8 18-10 2-4-16-8 8z"/>
              <path d="M1384 590Q1370 560 1400 560 1440 546 1464 556 1494 560 1486 596 1460 620 1470 650 1470 680 1450 676 1430 660 1400 652 1370 640 1384 616zM1556 604Q1540 590 1570 584 1560 560 1590 550 1630 540 1644 590M1556 630l90-30M1566 654l80-34M1562 650q10 30 44 50l40-24M0 580l10 4Q40 590 40 620V690L0 700M0 606l38 10M0 640l30-10"/>
              <path d="M1310 740Q1306 710 1330 714L1350 722 1390 708 1412 698Q1420 716 1414 734 1430 780 1390 792 1370 800 1334 794 1310 780 1320 764zM1414 760Q1440 740 1464 744M1464 744Q1474 720 1458 716 1462 700 1476 712 1490 740 1484 800V836Q1460 840 1466 820 1440 804 1420 826L1416 850Q1388 866 1376 856 1380 834 1366 818L1356 800M1340 740q-6 14 10 10M1386 734q-4 14 10 6M1360 758q8 8 14-4M1350 768l10-6 10 4"/>
              <path d="M1522 764L1612 752 1604 784 1612 820 1534 828Q1520 800 1522 764zM1540 782l50-4q6 6 0 8l-50 6M1540 800l36-4"/>
              <use href="#mic" transform="translate(1570 962) rotate(-6)"/><path d="M1440 1090Q1470 1080 1500 1050 1520 1030 1524 1070L1516 1122M1440 1090v32"/>
              <path d="M1326 660q0-14 8 0t0 18-8-18M1358 664q10-10 12 12t-12-12"/>
            </g>
            <g id="specks" class="ink"></g>
          </pattern>
        </defs>
        <rect width="100%" height="100%" fill="url(#tile)"/>
      </svg>
    </div>
  </section>
</main>

<div class="shade">
  <div class="modal" role="dialog" aria-labelledby="m-title">
    <h2 class="modal-title" id="m-title">Enter your mail</h2>
    <label class="modal-label" for="mail">Your mail</label>
    <input class="modal-input" id="mail" type="text">
    <button class="ok" type="button">OK</button>
  </div>
</div>
<script src="specks.js"></script>
</body>
</html>
```
FILE: specks.js
```js
// Small rings scattered between the larger wallpaper doodles: x, y, radius.
const rings = [
  [10,5,5],[10,24,2],[4,24,3],[33,14,2],[39,23,4],[52,20,2],[71,14,3],[71,24,2],[84,14,4],[58,30,4],[97,11,3],[51,38,2],[117,31,3],[186,21,3],[186,29,2],[222,11,2],[276,29,4],[290,30,2],[381,29,4],[407,17,4],[434,15,2],[427,23,3],[439,24,2],
  [22,54,2],[37,62,2],[52,62,3],[67,48,2],[70,53,3],[108,45,2],[118,43,2],[129,60,4],[140,56,2],[172,50,2],[195,45,3],[207,57,3],[125,78,2],[145,77,3],[140,72,2],[207,69,4],[217,96,2],[220,79,3],[79,86,4],[83,101,3],[122,97,3],[3,80,3],[12,80,3],[3,93,3],[8,118,3],
  [149,105,2],[181,114,2],[177,125,2],[132,130,4],[168,136,4],[183,142,2],[124,145,3],[243,130,2],[250,145,4],[256,132,3],[263,138,2],[331,123,4],[318,136,2],[328,137,2],[312,144,3],[299,144,2],[4,136,4],[16,149,3],[6,166,3],[103,166,5],[29,167,2],[42,170,3],[21,186,3],[34,185,3],[51,184,4],[56,193,2],[66,188,2],[98,182,3],[145,173,4],[160,173,2],[150,161,2],
  [211,172,2],[222,165,4],[234,163,4],[289,177,4],[258,188,2],[108,193,2],[50,210,2],[4,195,3],[2,213,3],[90,226,3],[99,226,3],[152,240,3],[143,244,2],[228,230,4],[235,241,3],[256,227,2],[262,231,2],[268,242,4],[331,240,4],[341,246,3],[355,242,3],[330,225,2],[344,212,3],[370,255,3],[390,163,3],[400,176,3],[386,186,3],[391,197,2],[398,214,3],[410,228,3],
  [5,251,3],[21,255,2],[21,247,2],[70,272,3],[11,283,3],[23,283,3],[70,301,2],[104,293,2],[119,295,2],[127,291,2],[148,295,4],[167,281,2],[186,285,3],[199,285,3],[94,302,4],[132,307,4],[9,309,4],[11,323,4],[84,301,2],[144,313,2],[154,310,2],[196,304,4],[205,297,2],[204,303,2],[283,275,3],[296,275,3],[233,260,3],[242,255,2],[316,310,2],[324,300,3],[366,304,2],[384,318,3],[391,294,3],[401,313,3],[402,325,3],[253,331,2],
  [9,340,2],[62,343,3],[79,359,2],[65,368,4],[73,380,2],[79,384,3],[117,375,4],[95,383,3],[116,358,2],[126,363,2],[145,360,3],[201,364,3],[217,357,2],[216,367,4],[249,384,2],[261,383,3],[272,373,4],[279,403,4],[296,402,3],[177,403,3],[187,407,2],[193,412,3],[195,424,4],[205,420,2],[218,424,3],[188,430,3],[193,443,4],[192,456,2],[229,418,2],[251,438,2],[262,438,3],[249,444,4],[272,444,4],[262,428,2],[255,438,1],
  [315,373,3],[330,389,3],[318,362,3],[22,460,2],[1,467,2],[53,486,2],[62,478,2],[70,480,2],[76,486,3],[48,486,2],[77,491,2],[103,466,2],[111,464,2],[106,477,3],[130,485,2],[120,457,3],[135,461,4],[186,470,2],[207,472,4],[219,471,3],[219,485,3],[230,473,3],[214,479,2],[283,471,3],[294,488,2],[300,501,4],[306,509,3],[308,494,2],[319,463,2],[340,498,2],[345,502,3],[394,505,2],[408,503,3],[417,481,3],[417,469,2],[437,487,2],
  [4,498,2],[5,512,3],[37,519,3],[107,514,3],[88,500,2],[42,535,2],[54,535,3],[77,529,2],[82,529,2],[84,537,3],[80,542,3],[53,547,4],[57,555,3],[42,558,2],[42,583,2],[58,583,3],[134,567,4],[142,555,3],[141,572,2],[128,580,2],[210,524,2],[216,527,3],[242,528,3],[215,573,3],[243,578,3],[211,584,2],[201,590,3],[211,595,4],[255,585,4],[254,596,4],[249,599,2],[260,519,2],[297,564,2],[338,558,3],[350,557,3],[338,568,3],[308,537,2],[296,543,3],[406,560,2],[424,563,3],
  [154,603,3],[305,607,4],[332,622,2],[191,625,2],[197,631,2],[197,638,2],[319,630,3],[323,642,4],[298,648,3],[285,648,3],[267,636,2],[364,609,3],[376,619,4],[374,600,2],[364,587,3],[400,586,2],[330,654,2],[383,648,3],[399,658,3],[217,687,3],[238,683,4],[230,659,2],[216,663,2],[125,688,3],[139,698,4],[108,667,2],[33,667,3],[45,669,2],[18,659,2],[6,627,3],[197,629,2],[195,692,2],
  [475,355,3],[456,389,3],[444,388,2],[432,386,3],[470,398,4],[422,425,3],[420,438,3],[434,440,3],[462,446,3],[512,412,3],[527,387,4],[418,462,3],[437,497,2],[442,497,3],[452,498,4],[466,495,3],[505,472,4],[480,502,2],[496,496,2],[497,519,2],[484,543,2],[490,540,3],[500,552,4],[480,557,2],[514,575,2],[492,617,3],[497,614,3],[502,614,2],[512,613,3],[527,614,4],[470,623,4],[492,643,2],[470,640,3],[500,690,3],[517,683,3],[476,668,2]
];
document.getElementById("specks").innerHTML = rings
  .map(([x, y, r]) => `<circle class="speck" cx="${x}" cy="${y}" r="${r}"/>`)
  .join("");
```
FILE: styles.css
```css
* { box-sizing: border-box; }
html { height: 100%; }
body {
  margin: 0;
  height: 100vh;
  display: flex;
  flex-direction: column;
  overflow: hidden;
  background: #f4f0f4;
  color: #111b21;
  font-family: "Liberation Sans", Arial, sans-serif;
  font-size: 16px;
}
h1, h2, p, ul { margin: 0; padding: 0; }
a { color: inherit; text-decoration: none; }
button, input { font: inherit; }
.defs { position: absolute; width: 0; height: 0; }

.top {
  padding-bottom: 19px;
  background: linear-gradient(#98dbdf, #c8e6ea 58%, #d2e7f1 69%, #d9e7e8 71%, #f2eff4);
}
.nav {
  display: grid;
  grid-template-columns: 1fr 320px 1fr;
  height: 57px;
  padding: 0 14% 0 16%;
  color: #fff;
  text-shadow: 2px 4px 8px #444;
}
.brand { justify-self: start; padding: 15px 0 0 46px; font-size: 24px; font-weight: 700; line-height: 28px; }
.links { display: flex; gap: 48px; justify-content: center; list-style: none; line-height: 20px; padding-top: 11px; }
.stars { display: flex; justify-self: end; align-items: center; gap: 3px; margin-right: 110px; filter: drop-shadow(2px 3px 3px #666); }
.stars svg { width: 15px; height: 15px; }
.stars .star-gap { margin-left: 4px; }

.login { display: flex; flex-direction: column; align-items: center; margin-right: 12px; }
.sub { padding-top: 4px; line-height: 20px; color: #fff; text-shadow: 2px 4px 8px #444; }
.title { padding-top: 3px; font-size: 32px; line-height: 36px; color: #f0e048; text-shadow: 2px 4px 8px #444; }
.field { display: flex; gap: 6px; align-items: center; margin-top: 10px; }
.field input { width: 195px; height: 24px; padding: 0; border: 0; text-align: center; background: #fff; }
input::placeholder { color: #757575; opacity: 1; }
.enter { width: 159px; height: 28px; margin-top: 8px; padding: 0; border: 2px outset #000; background: #efefef; color: #000; }

.app {
  flex: 1;
  min-height: 0;
  margin: 0 calc(13.5% + 6px) 0 calc(13.5% - 4px);
  display: grid;
  grid-template-columns: 3fr 7fr;
  background: #fff;
  box-shadow: 0 1px 4px rgba(0, 0, 0, .3);
}
.side { border-right: 1px solid #c8c8c8; }
.bar { display: flex; height: 61px; padding: 14px 16px 0 18px; background: #ededed; color: #51584f; }
.avatar { width: 34px; height: 34px; }
.tools { display: flex; gap: 25px; margin-left: auto; }
.tools button { width: 21px; height: 20px; padding: 0; border: 0; background: none; color: inherit; }
.icon { display: block; width: 20px; height: 20px; margin-top: -1px; }
.bubble { width: 22px; }
.find { padding: 6px 15px; background: #f6f6f6; }
.pill { display: flex; align-items: center; height: 38px; padding: 0 0 0 17px; border-radius: 19px; background: #fff; }
.find-icon { width: 16px; height: 16px; margin-bottom: 3px; }
.pill input { flex: 1; min-width: 0; padding: 0; border: 0; background: none; text-align: center; font-size: 14px; }
.item { display: flex; align-items: center; gap: 13px; height: 108px; padding: 0 18px; background: #ebebeb; border-bottom: 1px solid #d4d4d4; }
.avatar-lg { width: 39px; height: 39px; }
.item-title { font-size: 18px; line-height: 20px; color: #111; }
.item-text { margin-top: 20px; padding-bottom: 20px; font-size: 14px; line-height: 18px; }
.online { height: 86px; padding: 15px; border-bottom: 1px solid #ececec; }

.room { display: flex; flex-direction: column; min-width: 0; }
.who { margin: -5px 0 0 18px; text-align: center; }
.who-name { font-size: 16px; line-height: 18px; color: #111b21; }
.who-state { margin-top: 4px; font-size: 13px; line-height: 16px; color: #555; }
.wall { flex: 1; min-height: 0; background: #e5ddd5; }
.doodles { display: block; width: 100%; height: 100%; }
.ink { fill: none; stroke: #d8d1c9; stroke-width: 5; stroke-linejoin: round; stroke-linecap: round; }
.speck { stroke-width: 1; }

.shade { position: fixed; inset: 0; display: grid; place-items: center; background: rgba(0, 0, 0, .4); }
.modal {
  display: flex;
  flex-direction: column;
  align-items: center;
  width: 512px;
  padding: 24px 36px 25px;
  margin: 0 6px 2px 0;
  border-radius: 5px;
  background: #fff;
  color: #545454;
}
.modal-title { font-size: 30px; line-height: 34px; }
.modal-label { margin-top: 19px; line-height: 20px; }
.modal-input { width: 100%; height: 48px; margin-top: 21px; padding: 0 12px; border: 1px solid #b4dbed; border-radius: 3px; box-shadow: 0 0 0 3px #b0cce5; outline: 0; }
.ok { margin-top: 28px; width: 58px; height: 44px; padding: 0; border: 0; border-radius: 4px; background: #7066e0; color: #fff; }
```
